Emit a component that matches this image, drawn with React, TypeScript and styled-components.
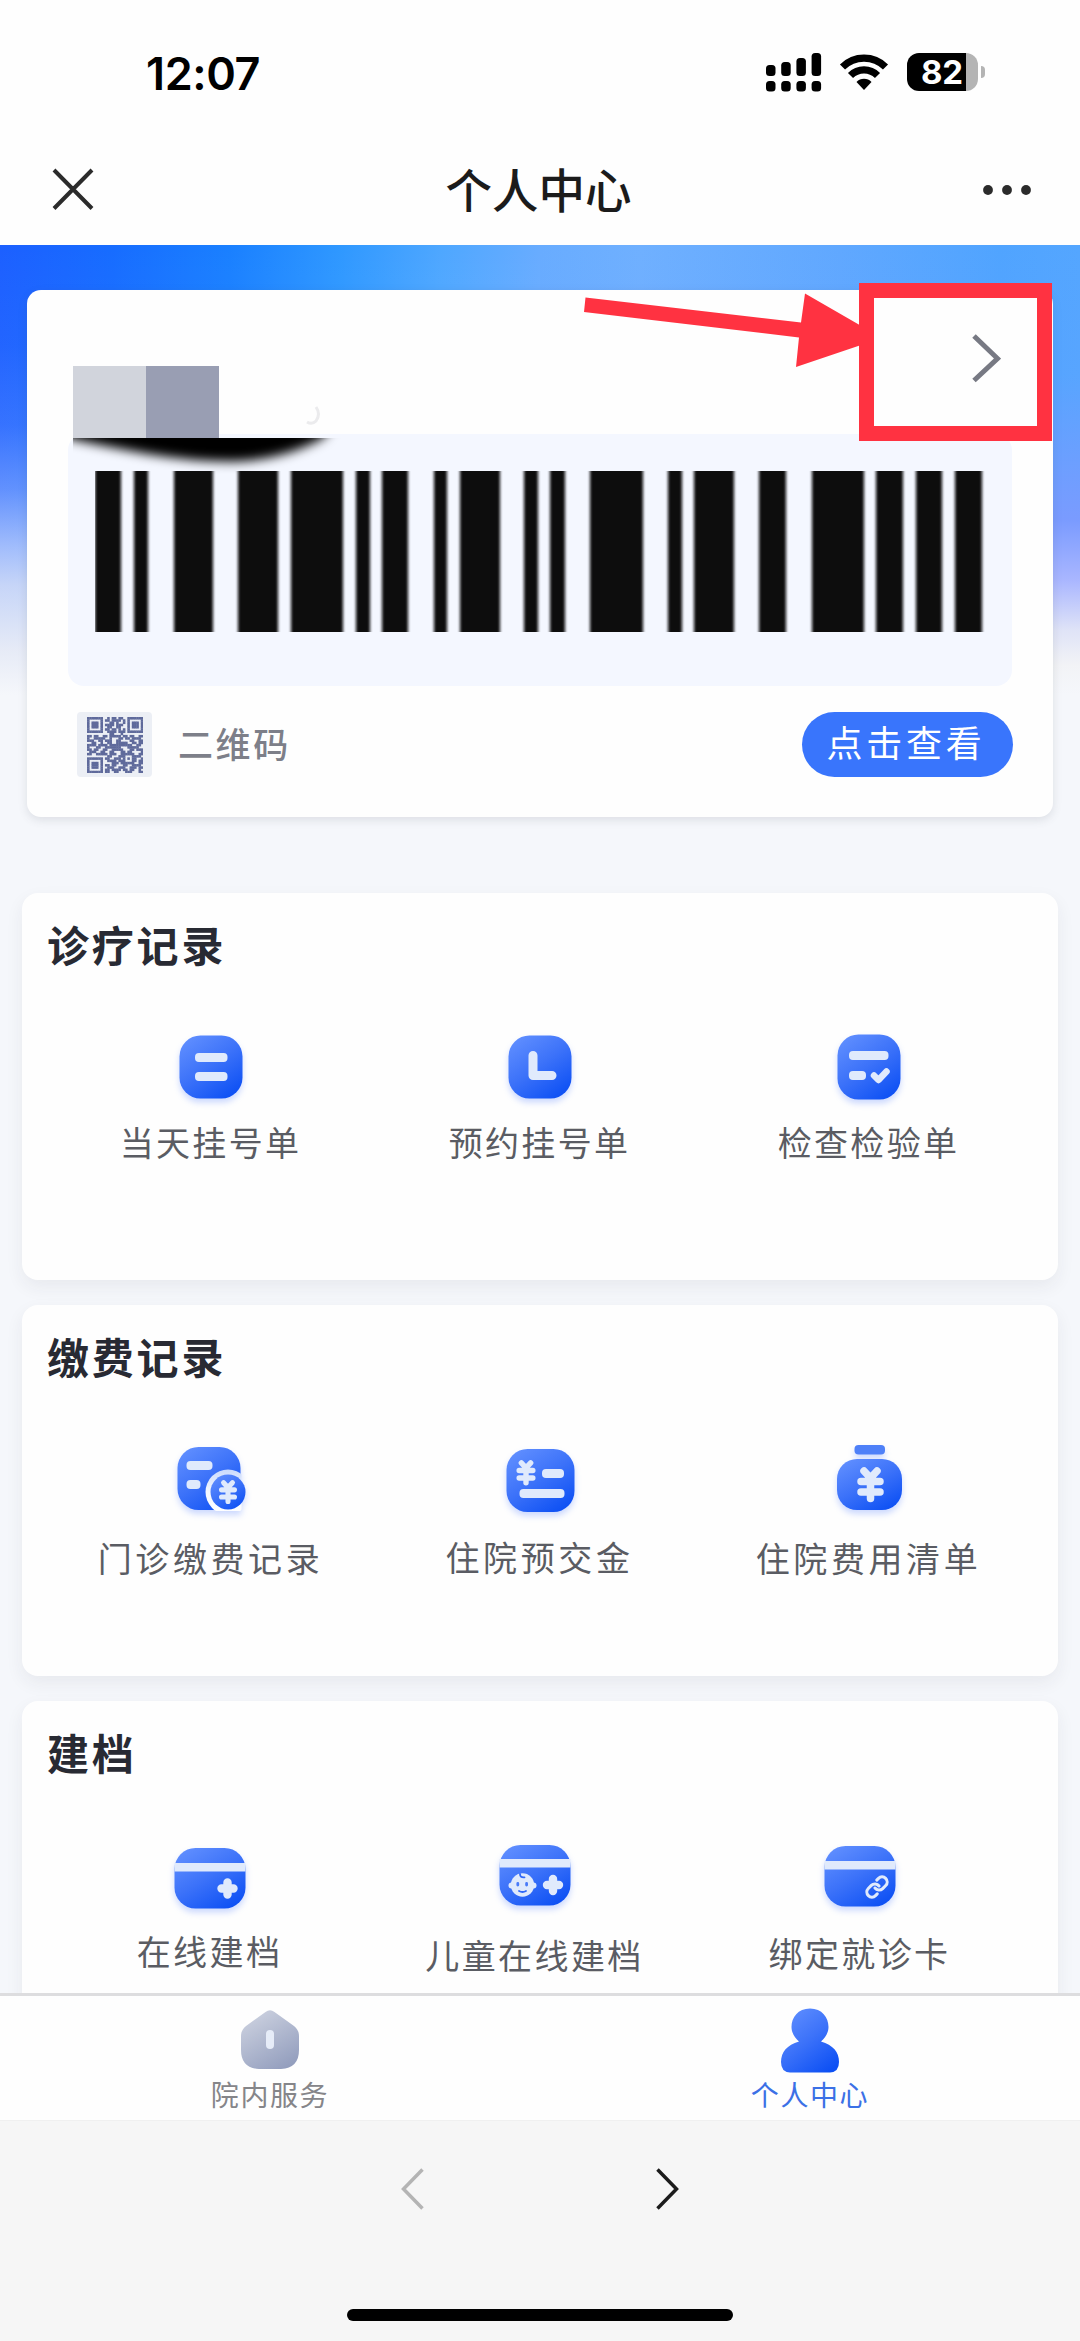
import React from "react";
import styled, { createGlobalStyle } from "styled-components";

const GlobalStyle = createGlobalStyle`
  * { box-sizing: border-box; }
  body { margin: 0; background: #f6f6f6; }
`;

const cjk = `"Noto Sans CJK SC", "Noto Sans", sans-serif`;

const Screen = styled.div`
  width: 1080px;
  height: 2341px;
  display: flex;
  flex-direction: column;
  overflow: hidden;
  font-family: ${cjk};
  background: #f6f6f6;
`;

const StatusBar = styled.header`
  height: 144px;
  flex: none;
  display: flex;
  justify-content: space-between;
  padding: 53px 95px 0 146px;
  background: #fefefe;
`;

const Clock = styled.div`
  font: 600 45px/42px Inter, sans-serif;
  letter-spacing: -0.4px;
  color: #000;
`;

const StatusIcons = styled.div`
  display: flex;
  align-items: flex-start;
`;

const Battery = styled.div`
  display: flex;
  align-items: center;
  gap: 3px;
  margin-left: 18px;
`;

const BatteryCell = styled.div`
  width: 71px;
  height: 38px;
  border-radius: 12px;
  background: linear-gradient(90deg, #000 59px, #b4b4b4 59px);
  color: #fff;
  font: 700 33px/39px Inter, sans-serif;
  letter-spacing: -0.2px;
  padding-left: 14px;
`;

const BatteryTip = styled.div`
  width: 4px;
  height: 12px;
  border-radius: 0 4px 4px 0;
  background: #b4b4b4;
`;

const NavBar = styled.nav`
  height: 101px;
  flex: none;
  display: grid;
  grid-template-columns: 60px 1fr 60px;
  align-items: start;
  padding: 22px 44px 0 43px;
  background: #fefefe;
`;

const NavTitle = styled.h1`
  margin: -2px 0 0 -2px;
  text-align: center;
  font-size: 46.5px;
  line-height: 48px;
  font-weight: 500;
  color: #1b1b1b;
`;

const Page = styled.main`
  height: 1748px;
  flex: none;
  overflow: hidden;
  display: flex;
  flex-direction: column;
  padding: 45px 22px 0;
  background:
    linear-gradient(180deg, rgba(245, 247, 251, 0) 0, rgba(245, 247, 251, 0.03) 100px, rgba(245, 247, 251, 0.12) 180px, rgba(245, 247, 251, 0.32) 244px, rgba(242, 244, 250, 0.62) 301px, rgba(241, 242, 246, 0.8) 340px, rgba(241, 242, 246, 0.95) 405px, #f5f7fb 450px) 0 0 / 540px 450px no-repeat,
    linear-gradient(180deg, rgba(122, 155, 255, 0) 0, rgba(122, 155, 255, 0.1) 130px, rgba(122, 155, 255, 1) 275px, #a9b6ff 335px, #dfe3f7 385px, #f2f3f6 420px, #f5f7fb 450px) 540px 0 / 540px 450px no-repeat,
    linear-gradient(90deg, #1c60ff 0, #176cff 110px, #1a80ff 230px, #2f98ff 340px, #4ea7ff 440px, #68acff 540px, #6fb0ff 640px, #60a8ff 840px, #50a4ff 1000px, #54a6ff 1080px) 0 0 / 1080px 450px no-repeat,
    #f5f7fb;
`;

const PatientCard = styled.section`
  position: relative;
  height: 527px;
  flex: none;
  margin: 0 5px 76px;
  border-radius: 14px;
  background: #fefefe;
  box-shadow: 0 3px 10px rgba(70, 75, 90, 0.14);
  padding: 0 41px;
`;

const IdentityRow = styled.div`
  height: 144px;
  display: flex;
  justify-content: space-between;
  padding: 44px 11px 0 5px;
`;

const Redacted = styled.div`
  position: relative;
  z-index: 1;
  display: flex;
  align-items: flex-end;
  height: 104px;
`;

const Block = styled.span<{ $tone: string }>`
  width: 73px;
  height: 72px;
  background: ${(p) => p.$tone};
`;

const CodePanel = styled.div`
  position: relative;
  height: 252px;
  border-radius: 16px;
  background: #f4f7ff;
  padding: 37px 0 0 27px;
`;

const Smudge = styled.svg`
  position: absolute;
  left: 5px;
  top: 4px;
`;

const QrRow = styled.div`
  display: flex;
  align-items: center;
  padding: 26px 0 0 9px;
`;

const QrThumb = styled.div`
  width: 75px;
  height: 65px;
  display: grid;
  place-items: center;
  border-radius: 4px;
  background: #eceff5;
`;

const QrLabel = styled.span`
  flex: 1;
  margin: -3px 0 0 26px;
  font-size: 35px;
  line-height: 60px;
  font-weight: 500;
  letter-spacing: 2.6px;
  color: #7d7f89;
`;

const ViewButton = styled.button`
  width: 211px;
  height: 65px;
  margin-right: -1px;
  border: 0;
  border-radius: 33px;
  background: #3975fc;
  color: #fff;
  font: 400 36px/58px ${cjk};
  letter-spacing: 3.8px;
  padding: 0 3px 8px 0;
`;

const ArrowMark = styled.svg`
  position: absolute;
  left: 555px;
  top: 0;
`;

const HighlightBox = styled.div`
  position: absolute;
  left: 832px;
  top: -7px;
  width: 193px;
  height: 158px;
  border: 15px solid #ff3241;
`;

const Section = styled.section<{ $height: number; $gap: number }>`
  height: ${(p) => p.$height}px;
  margin-bottom: ${(p) => p.$gap}px;
  flex: none;
  border-radius: 16px;
  background: #fefefe;
  box-shadow: 0 7px 18px rgba(45, 45, 60, 0.065);
`;

const SectionTitle = styled.h2`
  margin: 0;
  padding: 21px 0 0 25px;
  font-size: 42px;
  line-height: 60px;
  font-weight: 700;
  letter-spacing: 2.8px;
  color: #282a33;
`;

const Grid = styled.div<{ $column: number; $left: number; $top: number }>`
  display: grid;
  grid-template-columns: repeat(3, ${(p) => p.$column}px);
  padding: ${(p) => p.$top}px 0 0 ${(p) => p.$left}px;
`;

const Entry = styled.div<{ $offset: number; $gap: number }>`
  display: flex;
  flex-direction: column;
  align-items: center;
  gap: ${(p) => p.$gap}px;
  padding-top: ${(p) => p.$offset}px;
`;

const EntryLabel = styled.span<{ $spacing: number }>`
  font-size: 34px;
  line-height: 40px;
  letter-spacing: ${(p) => p.$spacing}px;
  white-space: nowrap;
  color: #5a5c63;
`;

const TabBar = styled.footer`
  height: 128px;
  flex: none;
  display: grid;
  grid-template-columns: 1fr 1fr;
  border-top: 3px solid #dddddf;
  border-bottom: 1px solid #f0f0f0;
  background: #fefefe;
`;

const Tab = styled.div<{ $active?: boolean }>`
  display: flex;
  flex-direction: column;
  align-items: center;
  padding-top: 9px;
  font-size: 28px;
  line-height: 32px;
  letter-spacing: 1.6px;
  color: ${(p) => (p.$active ? "#3b70e6" : "#858589")};
`;

const BrowserBar = styled.div`
  height: 220px;
  display: flex;
  flex-direction: column;
  align-items: center;
  justify-content: space-between;
  padding: 46px 0 20px;
`;

const History = styled.div`
  display: flex;
  gap: 228px;
`;

const HomeIndicator = styled.div`
  width: 386px;
  height: 12px;
  border-radius: 6px;
  background: #000;
`;

const BARS: [number, number][] = [
  [95, 26], [134, 14], [174, 39], [238, 40], [291, 52], [356, 14], [382, 26], [434, 13],
  [460, 40], [524, 14], [550, 15], [590, 53], [668, 14], [694, 40], [759, 27], [812, 52],
  [876, 27], [916, 26], [955, 27],
];

const Barcode = () => (
  <svg width="890" height="161" viewBox="95 0 890 161">
    <defs>
      <filter id="soft" x="-30%" width="160%" y="0" height="100%">
        <feGaussianBlur stdDeviation="1.7 0" />
      </filter>
    </defs>
    {BARS.map(([x, w]) => (
      <rect key={x} x={x} y="0" width={w} height="161" fill="#08090a" filter="url(#soft)" />
    ))}
  </svg>
);

const QR_ROWS = [
  "1111111001011011001111111",
  "1000001011011110101000001",
  "1011101000110100101011101",
  "1011101011110111001011101",
  "1011101001100110001011101",
  "1000001011011010101000001",
  "1111111001111011101111111",
  "0000000000110001000000000",
  "1101100110111110110110011",
  "1001111100100011011011110",
  "1110011011100110000110011",
  "0011001001100111110011011",
  "1111011110111111111100110",
  "1000110011111110001111100",
  "1101100110011111000110111",
  "0111001100110001101100001",
  "1100111110111001111110011",
  "0000000001100011100011110",
  "1111111011001110101011001",
  "1000001001111011100011011",
  "1011101000011101111110011",
  "1011101011011000110011110",
  "1011101001110011100111011",
  "1000001011011110110110010",
  "1111111011001100011100011",
];

const QrCode = () => (
  <svg width="56" height="56" viewBox="0 0 25 25">
    {QR_ROWS.flatMap((row, y) =>
      row.split("").map((cell, x) =>
        cell === "1" ? <rect key={`${x}-${y}`} x={x} y={y} width="1.15" height="1.15" fill="#5f6a9b" /> : null
      )
    )}
  </svg>
);

const Defs = () => (
  <svg width="0" height="0" style={{ display: "block" }}>
    <defs>
      <linearGradient id="blue" x1="0.1" y1="0" x2="0.8" y2="1">
        <stop offset="0" stopColor="#6290ff" />
        <stop offset="0.5" stopColor="#3c72f9" />
        <stop offset="1" stopColor="#0d50f4" />
      </linearGradient>
      <linearGradient id="grey" x1="0.2" y1="0" x2="0.8" y2="1">
        <stop offset="0" stopColor="#cdd2e0" />
        <stop offset="1" stopColor="#929dbd" />
      </linearGradient>
      <linearGradient id="ring" x1="0" y1="0" x2="0" y2="1">
        <stop offset="0" stopColor="#c9dafc" />
        <stop offset="0.5" stopColor="#f4f8ff" />
        <stop offset="1" stopColor="#ffffff" />
      </linearGradient>
      <clipPath id="ringClip">
        <rect x="0" y="0" width="70.5" height="71" />
      </clipPath>
    </defs>
  </svg>
);

const IconSvg = styled.svg`
  display: block;
  overflow: visible;
  filter: drop-shadow(0 4px 3px rgba(40, 95, 255, 0.24));
`;

const pale = "#e0eafc";

const Icon = ({ children }: { children: React.ReactNode }) => (
  <IconSvg width="80" height="80" viewBox="0 0 80 80" fill="none" strokeLinecap="round" strokeLinejoin="round">
    {children}
  </IconSvg>
);

const Tile = ({ x, y, w, h, r = 21 }: { x: number; y: number; w: number; h: number; r?: number }) => (
  <rect x={x} y={y} width={w} height={h} rx={r} fill="url(#blue)" />
);

const Pill = ({ x, y, w, h = 9 }: { x: number; y: number; w: number; h?: number }) => (
  <rect x={x} y={y} width={w} height={h} rx={h / 2.3} fill={pale} />
);

const Yen = ({ cx, top, s }: { cx: number; top: number; s: number }) => (
  <g transform={`translate(${cx} ${top}) scale(${s})`} stroke={pale} strokeWidth="7.5">
    <path d="M-6.5 4L0 11L6.5 4M0 11V31.5M-9.5 14.5H9.5M-9.5 25H9.5" />
  </g>
);

const Plus = ({ cx, cy }: { cx: number; cy: number }) => (
  <path d={`M${cx - 6} ${cy}H${cx + 6}M${cx} ${cy - 6}V${cy + 6}`} stroke={pale} strokeWidth="8.4" />
);

const TodayIcon = () => (
  <Icon>
    <Tile x={8.5} y={8.5} w={63} h={63} />
    <Pill x={24} y={26} w={32.5} />
    <Pill x={24} y={45} w={32.5} />
  </Icon>
);

const BookingIcon = () => (
  <Icon>
    <Tile x={8.5} y={8.5} w={63} h={63} />
    <path d="M33 28.5V48.5H52" stroke={pale} strokeWidth="9" />
  </Icon>
);

const ReportIcon = () => (
  <Icon>
    <Tile x={8.5} y={7.5} w={63} h={65} />
    <Pill x={20} y={24} w={39.5} />
    <Pill x={20} y={44} w={17} />
    <path d="M45 48.5L49.5 53L57.5 44.5" stroke={pale} strokeWidth="6.5" />
  </Icon>
);

const ClinicFeeIcon = () => (
  <Icon>
    <Tile x={6.5} y={7} w={63} h={63} />
    <Pill x={15.5} y={21} w={26} />
    <Pill x={15.5} y={40} w={14} />
    <circle cx="57" cy="52" r="22.5" fill="url(#ring)" clipPath="url(#ringClip)" />
    <circle cx="57" cy="52" r="17.5" fill="url(#blue)" />
    <Yen cx={57} top={40} s={0.68} />
  </Icon>
);

const DepositIcon = () => (
  <Icon>
    <Tile x={6.5} y={9} w={68} h={63} />
    <Yen cx={26} top={20} s={0.72} />
    <Pill x={42} y={29} w={22} />
    <Pill x={19.5} y={49} w={45} />
  </Icon>
);

const InvoiceIcon = () => (
  <Icon>
    <rect x="25.5" y="5" width="30.500" height="9.5" rx="4" fill="#4e80f8" />
    <Tile x={8} y={19} w={65} h={51} r={20} />
    <Yen cx={41.5} top={27} s={1} />
  </Icon>
);

const Card = ({ band }: { band: number }) => (
  <>
    <Tile x={4.5} y={10} w={71} h={60.5} />
    <rect x="4.5" y={band} width="71" height="8.5" fill={pale} />
  </>
);

const CreateIcon = () => (
  <Icon>
    <Card band={25} />
    <Plus cx={57.5} cy={50.5} />
  </Icon>
);

const ChildIcon = () => (
  <Icon>
    <Card band={24} />
    <circle cx="27.5" cy="50" r="11.7" fill={pale} />
    <circle cx="16.5" cy="50.5" r="3" fill={pale} />
    <circle cx="38.5" cy="50.5" r="3" fill={pale} />
    <path d="M25 39Q25 42.8 29.5 42.3" stroke="#2f68f8" strokeWidth="1.8" />
    <path d="M22.8 48.5V50M31.6 48.5V50" stroke="#4a7bf8" strokeWidth="2.8" />
    <path d="M24 56Q27.500 58 31 56" stroke="#2f68f8" strokeWidth="1.8" />
    <Plus cx={58} cy={50} />
  </Icon>
);

const BindIcon = () => (
  <Icon>
    <Card band={25} />
    <g transform="translate(57 51) scale(1.02) translate(-12 -12)" stroke={pale} strokeWidth="3">
      <path d="M10 13a5 5 0 0 0 7.540.540l3-3a5 5 0 0 0-7.070-7.070l-1.720 1.710" />
      <path d="M14 11a5 5 0 0 0-7.540-.540l-3 3a5 5 0 0 0 7.070 7.070l1.710-1.710" />
    </g>
  </Icon>
);

type EntryData = { label: string; icon: React.ReactNode; offset?: number; gap: number };

const SECTIONS: {
  title: string; height: number; gap: number; column: number; left: number; top: number; spacing: number; items: EntryData[];
}[] = [
  {
    title: "诊疗记录", height: 387, gap: 25, column: 329, left: 24, top: 53, spacing: 2.3,
    items: [
      { label: "当天挂号单", icon: <TodayIcon />, gap: 15 },
      { label: "预约挂号单", icon: <BookingIcon />, gap: 15 },
      { label: "检查检验单", icon: <ReportIcon />, gap: 15 },
    ],
  },
  {
    title: "缴费记录", height: 371, gap: 25, column: 329, left: 24, top: 54, spacing: 3.6,
    items: [
      { label: "门诊缴费记录", icon: <ClinicFeeIcon />, gap: 18 },
      { label: "住院预交金", icon: <DepositIcon />, gap: 17 },
      { label: "住院费用清单", icon: <InvoiceIcon />, gap: 18 },
    ],
  },
  {
    title: "建档", height: 400, gap: 0, column: 325, left: 25, top: 53, spacing: 2.4,
    items: [
      { label: "在线建档", icon: <CreateIcon />, offset: 3, gap: 13 },
      { label: "儿童在线建档", icon: <ChildIcon />, offset: 0, gap: 20 },
      { label: "绑定就诊卡", icon: <BindIcon />, offset: 1, gap: 17 },
    ],
  },
];

const Chevron = ({ flip, color }: { flip?: boolean; color: string }) => (
  <svg width="26" height="44" viewBox="0 0 26 44" fill="none" stroke={color} strokeWidth="3.5">
    <path d={flip ? "M22.5 2.5L3.5 22L22.5 41.5" : "M3.5 2.5L22.5 22L3.5 41.5"} />
  </svg>
);

export default function App() {
  return (
    <Screen>
      <GlobalStyle />
      <Defs />
      <StatusBar>
        <Clock>12:07</Clock>
        <StatusIcons>
          <svg width="56" height="39" viewBox="0 0 56 39">
            {[12, 9, 5, 0].map((top, i) => (
              <g key={top}>
                <rect x={i * 15.2} y={top} width="9.5" height={23 - top} rx="3.5" />
                <rect x={i * 15.2} y="28" width="9.5" height="10.500" rx="3.5" />
              </g>
            ))}
          </svg>
          <svg width="50" height="38" viewBox="0 0 50 38" style={{ marginLeft: 17 }} fill="none" stroke="#000" strokeWidth="7.2">
            <path d="M3.5 14A30.500 30.500 0 0 1 46.5 14" />
            <path d="M11.5 22.5A19 19 0 0 1 38.5 22.5" />
            <path d="M25 37L17.5 29A10.5 10.5 0 0 1 32.5 29Z" fill="#000" stroke="none" />
          </svg>
          <Battery>
            <BatteryCell>82</BatteryCell>
            <BatteryTip />
          </Battery>
        </StatusIcons>
      </StatusBar>
      <NavBar>
        <svg width="60" height="48" viewBox="0 0 60 48" stroke="#2b2b2b" strokeWidth="4">
          <path d="M11 4L49 42.5M49 4L11 42.5" />
        </svg>
        <NavTitle>个人中心</NavTitle>
        <svg width="60" height="48" viewBox="0 0 60 48" fill="#2b2b2b">
          <circle cx="12" cy="24" r="4.9" />
          <circle cx="31" cy="24" r="4.9" />
          <circle cx="50" cy="24" r="4.9" />
        </svg>
      </NavBar>
      <Page>
        <PatientCard>
          <IdentityRow>
            <Redacted>
              <Block $tone="#d1d4dc" />
              <Block $tone="#999eb3" />
              <svg width="110" height="103" fill="none" stroke="#ebebed" strokeWidth="3">
                <path d="M97 72Q102 79 97 86Q93 90 88 87" />
              </svg>
            </Redacted>
            <svg width="30" height="50" viewBox="0 0 30 50" fill="none" stroke="#777983" strokeWidth="5">
              <path d="M3 2L26.500 24.5L3 46.500" />
            </svg>
          </IdentityRow>
          <CodePanel>
            <Smudge width="290" height="46">
              <defs>
                <filter id="smear" x="-20%" y="-60%" width="140%" height="240%">
                  <feGaussianBlur stdDeviation="5.5" />
                </filter>
              </defs>
              <path filter="url(#smear)" fill="#000" d="M-20 -30L-6 0Q30 8 75 16Q120 23.500 160 23.500Q210 22 250 0L274 -30Z" />
            </Smudge>
            <Barcode />
          </CodePanel>
          <QrRow>
            <QrThumb>
              <QrCode />
            </QrThumb>
            <QrLabel>二维码</QrLabel>
            <ViewButton>点击查看</ViewButton>
          </QrRow>
          <ArrowMark width="300" height="90" viewBox="0 0 300 90" fill="#ff3241">
            <path d="M3.5 7.500L219 32.500L223 3.500L288 41L288 52L214 77L217 47.500L2 22Z" />
          </ArrowMark>
          <HighlightBox />
        </PatientCard>
        {SECTIONS.map((s) => (
          <Section key={s.title} $height={s.height} $gap={s.gap}>
            <SectionTitle>{s.title}</SectionTitle>
            <Grid $column={s.column} $left={s.left} $top={s.top}>
              {s.items.map((item) => (
                <Entry key={item.label} $offset={item.offset ?? 0} $gap={item.gap}>
                  {item.icon}
                  <EntryLabel $spacing={s.spacing}>{item.label}</EntryLabel>
                </Entry>
              ))}
            </Grid>
          </Section>
        ))}
      </Page>
      <TabBar>
        <Tab>
          <svg width="70" height="73" viewBox="0 0 70 73">
            <path fill="url(#grey)" d="M30.500 7Q35 3.500 39.500 7L59 21Q64 25 64 31V45Q64 63 46 64H24Q6 63 6 45V31Q6 25 11 21Z" />
            <rect x="31" y="25" width="8" height="19" rx="4" fill="#e6ecf8" />
          </svg>
          院内服务
        </Tab>
        <Tab $active>
          <svg width="70" height="73" viewBox="0 0 70 73">
            <path fill="url(#blue)" d="M35 3.500C47 3.500 53.500 12.500 53.500 22C53.500 28 50 33 46 36.500C58 40 64 47 64 57Q64 67 55 67.500H15Q6 67 6 57C6 47 12 40 24 36.500C20 33 16.500 28 16.500 22C16.500 12.500 23 3.500 35 3.500Z" />
          </svg>
          个人中心
        </Tab>
      </TabBar>
      <BrowserBar>
        <History>
          <Chevron flip color="#b4b4b4" />
          <Chevron color="#1c1c1c" />
        </History>
        <HomeIndicator />
      </BrowserBar>
    </Screen>
  );
}
